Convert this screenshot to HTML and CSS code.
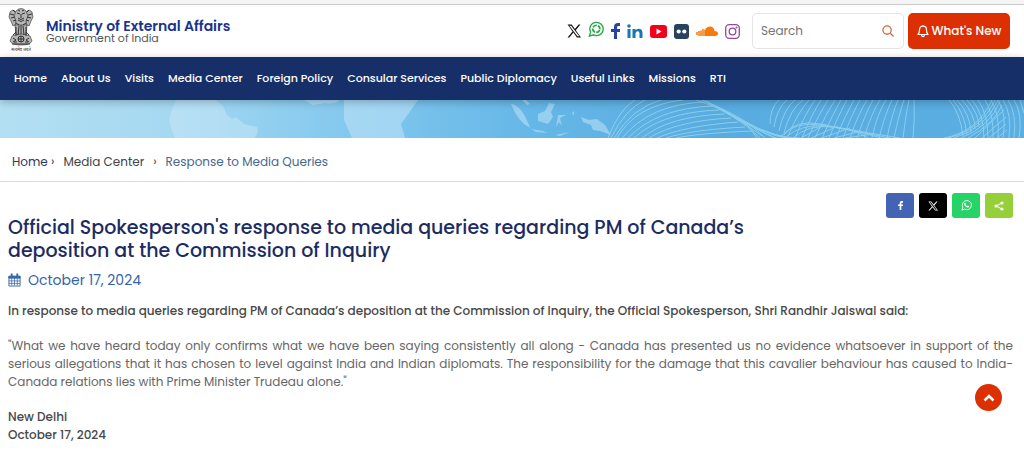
FILE: index.html
```html
<!DOCTYPE html>
<html lang="en">
<head>
<meta charset="utf-8">
<meta name="viewport" content="width=device-width, initial-scale=1">
<title>Response to Media Queries - Ministry of External Affairs</title>
<link rel="stylesheet" href="styles.css">
</head>
<body>
<div class="top-strip"></div>
<header class="header">
  <a class="brand" href="#">
    <svg class="emblem" viewBox="0 0 26 46" aria-hidden="true">
      <g fill="#b5b5b5" stroke="#444" stroke-width=".7">
        <path d="M2 4Q4 1 7 3L9 7 8 16 5 18 3 13 1 9Z"/>
        <path d="M24 4Q22 1 19 3L17 7 18 16 21 18 23 13 25 9Z"/>
        <path d="M8 3Q13-2 18 3L20 8 18 13 19 18H7L8 13 6 8Z"/>
        <path d="M7 17H19L18 27H8Z"/>
        <path d="M4 28Q13 24 22 28L24 33Q22 37 13 37T2 33Z"/>
      </g>
      <g fill="none" stroke="#222" stroke-width=".9">
        <path d="M9 5l3 1M17 5l-3 1M13 6v4M10 10q3 3 6 0M10 12q3 3 6 0M2 6l4 1M24 6l-4 1M3 10l4-1M23 10l-4-1M5 13l3-1M21 13l-3-1M8 15l3 2M18 15l-3 2M5 2l2 2M21 2l-2 2M10 2l2 1M16 2l-2 1"/>
        <path d="M8 19v9M11 18l-1 9M13 17v9M15 18l1 9M18 19v9M5 27l3-3M21 27l-3-3"/>
        <circle cx="13" cy="31" r="3"/>
        <path d="M13 28v6M10 31h6M5 30l3 2-3 2M21 30l-3 2 3 2M4 36h18M6 34h3M17 34h3"/>
      </g>
      <text class="motto" x="13" y="43" text-anchor="middle">सत्यमेव जयते</text>
    </svg>
    <span class="brand-text">
      <strong class="brand-name">Ministry of External Affairs</strong>
      <span class="brand-sub">Government of India</span>
    </span>
  </a>
  <div class="tools">
    <nav class="social" aria-label="Social media">
      <a href="#" aria-label="X"><svg width="14" height="14" viewBox="0 0 24 24"><path fill="#111" fill-rule="evenodd" d="M1 1h7l5.500 7.500L20 1h3l-8 9.500L24 23h-7l-6-8.300L4 23H1l8.500-10zM4 3l14 18h3L7 3z"/></svg></a>
      <a class="raised" href="#" aria-label="WhatsApp channel"><svg width="16" height="17" viewBox="0 0 24 24" fill="none" stroke="#27a844"><path stroke-width="2" d="M2 22l2-6A10 10 0 1 1 8 20z"/><circle cx="12.500" cy="11" r="5.300" stroke-width="2.500" stroke-dasharray="6.500 1.825" transform="rotate(20 12.500 11)"/></svg></a>
      <a href="#" aria-label="Facebook"><svg width="9" height="16" viewBox="0 0 9 16"><path fill="#29449c" d="M3 16V9H0V6h3V4q0-4 4-4h2v3H8Q6 3 6 4v2h3L9 9H6v7z"/></svg></a>
      <a href="#" aria-label="LinkedIn"><svg width="16" height="14" viewBox="0 0 16 14" fill="#1777b5"><circle cx="2" cy="2" r="1.800"/><path d="M.5 5h3v9h-3zM5.500 5h3v1.300Q9.500 4.700 11.800 4.700q3.700 0 3.700 4.300v5h-3V9.500q0-2.200-1.800-2.200T8.500 9.500V14h-3z"/></svg></a>
      <a href="#" aria-label="YouTube"><svg width="17" height="13" viewBox="0 0 17 13"><rect width="17" height="13" rx="3" fill="#f2001c"/><path d="M6.500 3.500v6l5-3z" fill="#fff"/></svg></a>
      <a href="#" aria-label="Flickr"><svg width="15" height="15" viewBox="0 0 15 15"><rect width="15" height="15" rx="3" fill="#28435f"/><circle cx="4.700" cy="7.500" r="2.100" fill="#fff"/><circle cx="10.300" cy="7.500" r="2.100" fill="#fff"/></svg></a>
      <a href="#" aria-label="SoundCloud"><svg width="22" height="11" viewBox="0 0 22 11"><path fill="#f77b0b" d="M11 10V1.500Q12 .5 14 .5q4 0 4.500 4.500Q22 5 22 7.500T19 10z"/><path stroke="#f77b0b" stroke-width="1.500" d="M1 6v3M3 5v5M5 4.500V10M7 3v7M9 3.500V10M10.500 2v8"/></svg></a>
      <a href="#" aria-label="Instagram"><svg width="15" height="15" viewBox="0 0 15 15" fill="none" stroke="#96479b" stroke-width="1.300"><rect x=".7" y=".7" width="13.600" height="13.600" rx="3.500"/><circle cx="7.500" cy="7.500" r="3.300"/><circle cx="11.500" cy="3.500" r=".4"/></svg></a>
    </nav>
    <form class="search">
      <input class="search-input" type="search" placeholder="Search" aria-label="Search">
      <button class="search-button" type="button" aria-label="Submit search"><svg width="12" height="12" viewBox="0 0 13 13" fill="none" stroke="#d2693a" stroke-width="1.400"><circle cx="5.500" cy="5.500" r="4.500"/><path d="M9 9l3.500 3.500"/></svg></button>
    </form>
    <button class="whats-new" type="button"><svg width="12" height="14" viewBox="0 0 12 14" fill="none" stroke="#fff" stroke-width="1.200" stroke-linejoin="round"><path d="M6 1v1.200M1 10.500Q2.500 9 2.500 6 2.500 2.200 6 2.200T9.500 6q0 3 1.500 4.500zM4.700 11q0 1.700 1.300 1.700T7.300 11"/></svg>What's New</button>
  </div>
</header>
<nav class="main-nav" aria-label="Main">
  <a href="#">Home</a><a href="#">About Us</a><a href="#">Visits</a><a href="#">Media Center</a><a href="#">Foreign Policy</a><a href="#">Consular Services</a><a href="#">Public Diplomacy</a><a href="#">Useful Links</a><a href="#">Missions</a><a href="#">RTI</a>
</nav>
<div class="banner">
  <svg class="banner-art" viewBox="0 0 1024 38" preserveAspectRatio="none" aria-hidden="true">
    <g class="land">
      <path d="M176 0H216Q225 6 226 14L232 19 236 17 244 24 257 27Q259 34 254 38H175Q168 24 170 15Z"/>
      <path d="M304 0H340Q334 5 325 3L313 5Z"/>
      <path d="M344 0H418L406 17 401 24 405 38H352L344 20Z"/>
      <path d="M511 4Q521 5 529 25L530 28Q518 22 511 4ZM522 0L527 5 530 4 526 0ZM538 14L545 11 549 3 555 4 551 12 553 17 548 24 538 21ZM531 29L543 31 548 33 536 32ZM558 15H566L560 18 562 26 559 22 556 27ZM581 17L589 20 597 19 605 25 611 35 600 31 593 30 591 25 583 22ZM555 35L570 32 560 36ZM572 13L574 11 574 16Z"/>
    </g>
    <g class="waves">
      <path d="M608 38Q619 9 635 0M611 38Q625 9 645 0M614 38Q632 8 661 0M617 38Q636 5 683 0M622 38Q650 4 705 2M628 38Q657 8 713 6M634 38Q662 12 719 10M642 38Q669 16 725 14M649 38Q676 21 731 18M657 38Q684 26 738 22M666 38Q690 30 745 27M676 38Q700 33 753 31"/>
      <path d="M696 0Q716 6 745 22T800 38M702 0Q723 8 750 24T795 38M706 1Q727 12 755 28T790 38M708 3Q730 12 762 36M719 9Q743 21 760 38M728 14Q750 26 775 38M735 18Q757 29 786 38M745 22L757 38M753 27L765 38"/>
      <path d="M770 24Q770 8 779 0M774 27Q777 8 787 0M779 31Q784 8 795 0M784 33Q790 9 803 0M788 36Q798 12 809 0M795 38Q805 14 815 0M802 38Q812 14 821 0M808 38Q819 14 828 0M815 38Q826 14 835 0M822 38Q833 14 841 0M829 38Q839 14 847 0M836 38Q846 14 854 0M843 38Q852 14 860 0M850 38Q858 14 867 0M857 38Q865 14 873 0M864 38Q871 14 880 0M872 38Q877 14 886 0M879 38Q885 14 892 0M887 38Q892 14 898 0M894 38Q899 14 904 0M903 38Q906 14 909 0M913 38Q915 20 914 0"/>
      <path d="M784 35Q795 19 820 24T900 38M780 37Q795 21 820 25T890 38M786 37Q801 24 825 26T881 38M793 38Q808 24 833 27T868 38M801 38L826 24M811 38L838 26M822 38L850 28M834 38L861 31M845 38L873 34"/>
      <path d="M949 0Q960 12 963 36M953 0Q965 14 967 35M957 0Q970 14 971 32M962 0Q975 14 975 29M967 0Q979 14 979 27M972 0Q984 14 984 38M978 0Q988 14 988 38M985 0Q994 14 993 38M991 0Q1000 14 998 38M998 0Q1007 14 1003 38M1003 0Q1012 14 1009 38M1008 0Q1017 14 1014 38M1014 0Q1023 14 1019 38M1020 0L1024 13"/>
      <path d="M944 38Q977 32 992 0M948 38Q981 30 995 0M954 38Q986 28 998 0M961 38Q991 26 1000 1M968 38Q996 22 1002 5M975 38L1004 10M982 38L1006 17M989 38L1006 24M997 38L1007 30"/>
    </g>
  </svg>
</div>
<nav class="breadcrumb" aria-label="Breadcrumb">
  <span class="crumb-home"><a href="#">Home</a> ›</span>
  <a href="#">Media Center</a>
  <span>›</span>
  <a class="current" href="#">Response to Media Queries</a>
</nav>
<main class="content">
  <div class="title-row">
    <div class="title-block">
      <h1 class="title">Official Spokesperson's response to media queries regarding PM of Canada’s deposition at the Commission of Inquiry</h1>
      <p class="date"><svg width="13" height="14" viewBox="0 0 14 14" fill="none" stroke="#3867aa"><path d="M1 3h12v10.500H1z"/><path fill="#3867aa" d="M1 3h12v2H1z"/><path stroke-width="2" d="M4 0v4M10 0v4"/><path d="M4 5v8M7 5v8M10 5v8M1 8h12M1 10.700h12" stroke-width=".8"/></svg>October 17, 2024</p>
    </div>
    <div class="share">
      <a class="share-facebook" href="#" aria-label="Share on Facebook"><svg width="5" height="9" viewBox="0 0 9 16"><path fill="#fff" d="M3 16V9H0V6h3V4q0-4 4-4h2v3H8Q6 3 6 4v2h3L9 9H6v7z"/></svg></a>
      <a class="share-x" href="#" aria-label="Share on X"><svg width="10" height="10" viewBox="0 0 24 24"><path fill="#fff" fill-rule="evenodd" d="M1 1h7l5.500 7.500L20 1h3l-8 9.500L24 23h-7l-6-8.300L4 23H1l8.500-10zM4 3l14 18h3L7 3z"/></svg></a>
      <a class="share-whatsapp" href="#" aria-label="Share on WhatsApp"><svg width="11" height="11" viewBox="0 0 24 24"><path fill="none" stroke="#fff" stroke-width="2" d="M2 22l2-6A10 10 0 1 1 8 20z"/><path fill="#fff" d="M8 6h2l1 3-1 1.500q1 2 3.500 3.200L15 12l3 1.500q0 3-3 3Q8 15 7 9 7 7 8 6z"/></svg></a>
      <a class="share-more" href="#" aria-label="Share"><svg width="10" height="10" viewBox="0 0 10 10" fill="#fff"><path d="M8 2L2 5l6 3" fill="none" stroke="#fff"/><circle cx="8" cy="2" r="1.600"/><circle cx="2" cy="5" r="1.600"/><circle cx="8" cy="8" r="1.600"/></svg></a>
    </div>
  </div>
  <article class="article">
    <p class="strong">In response to media queries regarding PM of Canada’s deposition at the Commission of Inquiry, the Official Spokesperson, Shri Randhir Jaiswal said:</p>
    <p class="quote">"What we have heard today only confirms what we have been saying consistently all along - Canada has presented us no evidence whatsoever in support of the serious allegations that it has chosen to level against India and Indian diplomats. The responsibility for the damage that this cavalier behaviour has caused to India-Canada relations lies with Prime Minister Trudeau alone."</p>
    <p class="strong">New Delhi<br>October 17, 2024</p>
  </article>
</main>
<button class="to-top" type="button" aria-label="Back to top"><svg width="12" height="8" viewBox="0 0 12 8" fill="none" stroke="#fff" stroke-width="2.500"><path d="M1.500 6.500L6 2l4.500 4.500"/></svg></button>
</body>
</html>
```
FILE: styles.css
```css
* { box-sizing: border-box; }
body { margin: 0; background: #fff; color: #555; font: 12px/18px Poppins, Inter, sans-serif; }
a { color: inherit; text-decoration: none; }
svg { display: block; flex: none; }
h1, p { margin: 0; }
button, input { font: inherit; }

.top-strip { height: 5px; background: #f4f4f4; border-bottom: 1px solid #ccc; }

.header { display: flex; align-items: center; justify-content: space-between; min-height: 52px; padding: 0 14px 0 8px; }
.brand { display: flex; align-items: center; gap: 12px; }
.emblem { width: 26px; height: 46px; }
.motto { fill: #222; font: 4px "Noto Sans", sans-serif; }
.brand-text { display: flex; flex-direction: column; }
.brand-name { color: #1b338c; font-size: 14px; line-height: 14px; font-weight: 600; }
.brand-sub { font-size: 11px; line-height: 11px; }
.tools { display: flex; align-items: center; gap: 4px; }
.social { display: flex; align-items: center; gap: 7px; margin-right: 8px; }
.raised { padding-bottom: 3px; }
.search { display: flex; align-items: center; width: 152px; height: 36px; padding: 0 9px 0 8px; border: 1px solid #e4e4e4; border-radius: 5px; }
.search-input { flex: 1; min-width: 0; padding: 0; border: 0; outline: 0; background: none; font-size: 12px; }
.search-input::placeholder { color: #757575; opacity: 1; }
.search-button { padding: 0; border: 0; background: none; }
.whats-new { display: flex; align-items: center; justify-content: center; gap: 3px; width: 102px; height: 36px; padding: 0; border: 0; border-radius: 5px; background: #dc3003; color: #fff; font-size: 12px; font-weight: 500; white-space: nowrap; }

.main-nav { position: relative; display: flex; align-items: center; gap: 14px; min-height: 43px; padding: 0 14px 2px; background: #172f69; color: #fff; font-size: 11px; font-weight: 500; white-space: nowrap; box-shadow: 0 2px 8px rgba(0, 0, 0, .25); }

.banner { height: 38px; background: linear-gradient(90deg, #b3dff2 0, #a6d9f1 16%, #83c8ee 34%, #65b7e7 52%, #58acdf 70%, #5aaee1 100%); }
.banner-art { width: 100%; height: 100%; }
.land { fill: #c9e8f8; opacity: .5; }
.waves { fill: none; stroke: #a5e0f8; stroke-width: 1; opacity: .65; }

.breadcrumb { display: flex; align-items: center; gap: 9px; min-height: 44px; padding: 4px 12px 0; border-bottom: 1px solid #ddd; color: #444; }
.crumb-home { color: #2f3a56; }
.current { color: #456990; }

.content { padding: 11px 11px 12px 8px; }
.title-row { display: flex; justify-content: space-between; align-items: flex-start; }
.title-block { width: 75%; padding-top: 23px; }
.title { color: #1c2c62; font-size: 19px; line-height: 23px; font-weight: 500; }
.date { display: flex; align-items: center; gap: 7px; margin-top: 9px; color: #3464ab; font-size: 14px; }
.share { display: flex; gap: 5px; }
.share a { display: grid; place-items: center; width: 28px; height: 25px; border-radius: 3px; }
.share-facebook { background: #4264b2; }
.share-x { background: #000; }
.share-whatsapp { background: #25d366; }
.share-more { background: #95d03a; }

.article { display: grid; gap: 17px; margin-top: 13px; }
.strong { color: #484848; font-weight: 500; }
.quote { color: #666; text-align: justify; }

.to-top { position: fixed; right: 22px; bottom: 44px; display: grid; place-items: center; width: 27px; height: 27px; padding: 0; border: 0; border-radius: 50%; background: #dc3003; }
```
